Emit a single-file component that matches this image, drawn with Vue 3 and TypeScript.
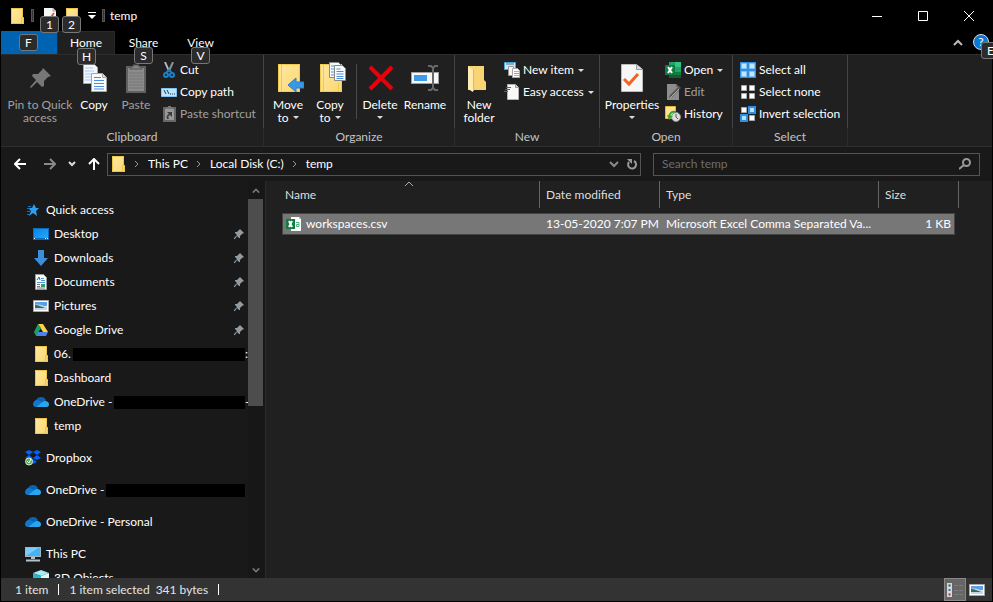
<script setup lang="ts">
interface Tab { label: string; tip: string; active?: boolean }
interface SmallCommand { label: string; icon: string; disabled?: boolean; caret?: boolean }
interface LargeCommand { lines: string[]; icon: string; width: string; disabled?: boolean; caret?: boolean; divider?: boolean }
interface Group { name: string; size: string; large: LargeCommand[]; small: SmallCommand[] }
interface TreeNode { label: string; icon: string; level: number; pinned?: boolean; redacted?: boolean; tail?: string; spaced?: boolean }

const tabs: Tab[] = [
  { label: 'Home', tip: 'H', active: true },
  { label: 'Share', tip: 'S' },
  { label: 'View', tip: 'V' },
]

const groups: Group[] = [
  {
    name: 'Clipboard',
    size: 'clipboard',
    large: [
      { lines: ['Pin to Quick', 'access'], icon: 'pin-large', width: 'wide', disabled: true },
      { lines: ['Copy'], icon: 'copy', width: 'normal' },
      { lines: ['Paste'], icon: 'paste', width: 'normal', disabled: true },
    ],
    small: [
      { label: 'Cut', icon: 'cut' },
      { label: 'Copy path', icon: 'copy-path' },
      { label: 'Paste shortcut', icon: 'paste-shortcut', disabled: true },
    ],
  },
  {
    name: 'Organize',
    size: 'organize',
    large: [
      { lines: ['Move', 'to'], icon: 'move-to', width: 'normal', caret: true },
      { lines: ['Copy', 'to'], icon: 'copy-to', width: 'normal', caret: true },
      { lines: ['Delete', ''], icon: 'delete', width: 'normal', caret: true, divider: true },
      { lines: ['Rename'], icon: 'rename', width: 'medium' },
    ],
    small: [],
  },
  {
    name: 'New',
    size: 'new',
    large: [{ lines: ['New', 'folder'], icon: 'new-folder', width: 'normal' }],
    small: [
      { label: 'New item', icon: 'new-item', caret: true },
      { label: 'Easy access', icon: 'easy-access', caret: true },
    ],
  },
  {
    name: 'Open',
    size: 'open',
    large: [{ lines: ['Properties', ''], icon: 'properties', width: 'broad', caret: true }],
    small: [
      { label: 'Open', icon: 'excel', caret: true },
      { label: 'Edit', icon: 'edit', disabled: true },
      { label: 'History', icon: 'history' },
    ],
  },
  {
    name: 'Select',
    size: 'select',
    large: [],
    small: [
      { label: 'Select all', icon: 'select-all' },
      { label: 'Select none', icon: 'select-none' },
      { label: 'Invert selection', icon: 'invert' },
    ],
  },
]

const crumbs: string[] = ['This PC', 'Local Disk (C:)', 'temp']

const tree: TreeNode[] = [
  { label: 'Quick access', icon: 'star', level: 0 },
  { label: 'Desktop', icon: 'desktop', level: 1, pinned: true },
  { label: 'Downloads', icon: 'downloads', level: 1, pinned: true },
  { label: 'Documents', icon: 'documents', level: 1, pinned: true },
  { label: 'Pictures', icon: 'pictures', level: 1, pinned: true },
  { label: 'Google Drive', icon: 'gdrive', level: 1, pinned: true },
  { label: '06.', icon: 'folder', level: 1, redacted: true, tail: ':' },
  { label: 'Dashboard', icon: 'folder', level: 1 },
  { label: 'OneDrive -', icon: 'onedrive', level: 1, redacted: true, tail: '-' },
  { label: 'temp', icon: 'folder', level: 1 },
  { label: 'Dropbox', icon: 'dropbox', level: 0, spaced: true },
  { label: 'OneDrive -', icon: 'onedrive', level: 0, redacted: true, spaced: true },
  { label: 'OneDrive - Personal', icon: 'onedrive', level: 0, spaced: true },
  { label: 'This PC', icon: 'pc', level: 0, spaced: true },
  { label: '3D Objects', icon: 'objects', level: 1 },
]
</script>

<template>
  <svg class="sprite" aria-hidden="true">
    <defs>
      <linearGradient id="gold" x1="0" y1="0" x2="1" y2="1">
        <stop offset="0" stop-color="#ffe9a2" /><stop offset="1" stop-color="#fbd86f" />
      </linearGradient>
      <linearGradient id="sky" x1="0" y1="0" x2="1" y2="1">
        <stop offset="0" stop-color="#0a84e4" /><stop offset="1" stop-color="#22aaff" />
      </linearGradient>
    </defs>
    <symbol id="i-folder" viewBox="0 0 16 16">
      <path d="M2 0h12v9l1 1v6H2z" fill="url(#gold)" />
      <path d="M2.500 .5h11v9M2.500 .5v15h12v-6h-2v6" fill="none" stroke="#efc345" />
    </symbol>
    <symbol id="i-doc-check" viewBox="0 0 16 16">
      <path d="M2 0h9l3 3v13H2z" fill="#f6f6f6" /><path d="M11 0v3h3" fill="none" stroke="#999" />
      <path d="M4 9l3 3 5-7" fill="none" stroke="#e5602c" stroke-width="2" />
    </symbol>
    <symbol id="i-pin-large" viewBox="0 0 32 32">
      <path d="M19 6l8 8-3 1-4 4v5l-2 1-5-5-6 6-1-1 6-7-4-4 1-2h5l4-4z" fill="#777" />
    </symbol>
    <symbol id="i-copy" viewBox="0 0 32 32">
      <path d="M5.500 2.500h11l3 3v16h-14z" fill="#f4f8fc" stroke="#a6a6a6" />
      <path d="M7 6h8M7 9h9M7 12h9M7 15h9M7 18h9" stroke="#a4c8f5" />
      <path d="M13.500 11.500h11l4 4v14h-15z" fill="#f8fafc" stroke="#a6a6a6" />
      <path d="M16 15.500h7M16 18.500h10M16 21.500h10M16 24.500h10M16 27h10" stroke="#4a90e2" />
      <path d="M24.500 11.500v4h4" fill="#ddd" stroke="#a6a6a6" />
    </symbol>
    <symbol id="i-paste" viewBox="0 0 32 32">
      <path d="M7 5h18v25H7z" fill="#8b8b8b" stroke="#606060" stroke-width="2" />
      <path d="M10 7V5h3V3h6v2h3v2z" fill="#858585" stroke="#555" />
      <path d="M9 11h14M9 14h14M9 17h14M9 20h14M9 23h14M9 26h14" stroke="#777" />
    </symbol>
    <symbol id="i-cut" viewBox="0 0 16 16">
      <path d="M4 0l4 9M12 0L8 9" stroke="#8c9499" stroke-width="2" fill="none" />
      <path d="M4 0l4 9" stroke="#c5cbd0" />
      <ellipse cx="5" cy="13" rx="2" ry="2" fill="none" stroke="#1682ca" stroke-width="2" />
      <ellipse cx="11" cy="13" rx="2" ry="2" fill="none" stroke="#1682ca" stroke-width="2" />
      <path d="M5 11l3-3 3 3" stroke="#1682ca" stroke-width="2" fill="none" />
    </symbol>
    <symbol id="i-copy-path" viewBox="0 0 16 16">
      <path d="M.5 4.500h15v8H.5z" fill="#bfe3fb" stroke="#84c3ee" />
      <path d="M3 6l2 4M6 6l2 4M9 10h1M11 10h1M13 10h1" stroke="#16415f" fill="none" />
    </symbol>
    <symbol id="i-paste-shortcut" viewBox="0 0 16 16">
      <path d="M3 2h11v13H3z" fill="#999" stroke="#666" stroke-width="2" />
      <path d="M5 3V1h2V0h3v1h2v2z" fill="#777" />
      <path d="M6 13c-1-3 0-4 2-5L6 6h5v5L9 9c-2 1-2 2-1 4z" fill="#3c3c3c" />
    </symbol>
    <symbol id="i-move-to" viewBox="0 0 32 32">
      <path d="M6 2h22v28H6z" fill="url(#gold)" /><path d="M6.500 2.500h21v27h-21zM9.500 3v26" fill="none" stroke="#f3c84b" />
      <path d="M16 23l8-7v4h8v6h-8v4z" fill="#3a98e8" stroke="#2f7fc8" />
    </symbol>
    <symbol id="i-copy-to" viewBox="0 0 32 32">
      <path d="M6 2h22v28H6z" fill="url(#gold)" /><path d="M6.500 2.500h21v27h-21zM9.500 3v26M24.500 29v-8" fill="none" stroke="#f3c84b" />
      <path d="M15.500 .5h9l3 3v12h-12z" fill="#f4f8fc" stroke="#8a8a8a" />
      <path d="M17 4h3M17 7h3M17 10h3M17 13h3" stroke="#4a90e2" />
      <path d="M20.500 3.500h8l3 3v12h-11z" fill="#f8fafc" stroke="#8a8a8a" />
      <path d="M22.500 7h4M22.500 9.500h7M22.500 12h7M22.500 14.500h7M22.500 16.500h7" stroke="#4a90e2" />
    </symbol>
    <symbol id="i-delete" viewBox="0 0 32 32">
      <path d="M6 5l22 22M28 5L6 27" stroke="#e8000d" stroke-width="4" />
    </symbol>
    <symbol id="i-rename" viewBox="0 0 32 32">
      <path d="M2 10h28v12H2z" fill="#a0a0a0" /><path d="M3 11h26v10H3z" fill="#f7f7f7" />
      <path d="M5 13h13v6H5z" fill="#3d9bea" />
      <path d="M19 4h3l2 2v20l-2 2h-3M29 4h-3l-2 2v20l2 2h3" fill="none" stroke="#696969" stroke-width="2" />
    </symbol>
    <symbol id="i-new-folder" viewBox="0 0 32 32">
      <path d="M5 4h16v14l2 2v8H5z" fill="#f9d472" /><path d="M5 4l5 4v22l-5-3z" fill="#ffecb0" />
      <path d="M10.500 8v21" stroke="#e6b84d" />
    </symbol>
    <symbol id="i-new-item" viewBox="0 0 16 16">
      <path d="M.5 .5h11v7H.5z" fill="#cfe8f6" stroke="#4ba3d4" /><path d="M2 2h8" stroke="#39718f" />
      <path d="M4.500 4.500h5v9h-5z" fill="#f6f6f6" stroke="#999" />
      <path d="M8.500 6.500h5l2 2v7h-7z" fill="#fff" stroke="#aaa" />
      <path d="M10 9.500h5M10 13.500h5" stroke="#f09a90" /><path d="M10 11.500h5" stroke="#70a3e0" />
    </symbol>
    <symbol id="i-easy-access" viewBox="0 0 16 16">
      <path d="M3.500 .5h8l3 3v12h-11z" fill="#f8f8f8" stroke="#b2b2b2" /><path d="M11.500 .5v3h3" fill="#ddd" stroke="#999" />
      <path d="M2 3.500h5M1 5.500h5M0 7.500h4" stroke="#2b6fa8" />
    </symbol>
    <symbol id="i-properties" viewBox="0 0 32 32">
      <path d="M5.500 2.500h15l6 5v22h-21z" fill="#f7f7f7" stroke="#bcbcbc" /><path d="M20.500 2.500v5h6" fill="#ddd" stroke="#999" />
      <path d="M8 17l5 5 9-10" fill="none" stroke="#f26322" stroke-width="3" />
    </symbol>
    <symbol id="i-excel" viewBox="0 0 16 16">
      <path d="M4 0h12v16H4z" fill="#21a366" /><path d="M10 0h6v5h-6z" fill="#33c481" /><path d="M4 5h6v5H4z" fill="#107c41" /><path d="M4 10h12v6H4z" fill="#185c37" /><path d="M10 10h6v3h-6z" fill="#107c41" />
      <path d="M0 3h10v10H0z" fill="#107c41" /><path d="M3 5l4 6M7 5l-4 6" stroke="#fff" stroke-width="2" />
    </symbol>
    <symbol id="i-edit" viewBox="0 0 16 16">
      <path d="M2 0h9l3 3v13H2z" fill="#8d8d8d" /><path d="M11 0v3h3" fill="#666" /><path d="M4 14l1-3 9-9 2 2-9 9z" fill="#555" /><path d="M5 14l9-9" stroke="#aaa" />
    </symbol>
    <symbol id="i-history" viewBox="0 0 16 16">
      <path d="M.5 .5h10v12H.5z" fill="#ffe28a" stroke="#e3b63c" />
      <circle cx="11" cy="11" r="4.500" fill="#ddd" stroke="#8c8c8c" /><path d="M11 8v3l2 2" fill="none" stroke="#555" />
      <path d="M4 12C4 7 7 5 11 6" fill="none" stroke="#34a53d" stroke-width="2" /><path d="M2 9l2 5 4-4z" fill="#34a53d" />
    </symbol>
    <symbol id="i-select-all" viewBox="0 0 16 16">
      <path d="M0 0h16v16H0z" fill="#2f8fe3" />
      <path d="M1.500 1.500h5v5h-5zM9.500 1.500h5v5h-5zM1.500 9.500h5v5h-5zM9.500 9.500h5v5h-5z" fill="#c4e5fc" stroke="#7fc0f5" />
    </symbol>
    <symbol id="i-select-none" viewBox="0 0 16 16">
      <path d="M1.500 1.500h5v5h-5zM9.500 1.500h5v5h-5zM1.500 9.500h5v5h-5zM9.500 9.500h5v5h-5z" fill="#fff" stroke="#aaa" />
    </symbol>
    <symbol id="i-invert" viewBox="0 0 16 16">
      <path d="M1.500 1.500h5v5h-5zM9.500 9.500h5v5h-5z" fill="#fff" stroke="#aaa" />
      <path d="M9 1h6v6H9zM1 9h6v6H1z" fill="#b9dffb" stroke="#2f8fe3" stroke-width="2" />
    </symbol>
    <symbol id="i-star" viewBox="0 0 16 16">
      <path d="M9 2l2 4h3l-3 3 1 5-4-3-4 3 2-5-3-3h4z" fill="#2d9ff0" />
      <path d="M3 4.500h3M2 6.500h3M2 9.500h3M2 12.500h3" stroke="#1c6fb0" />
    </symbol>
    <symbol id="i-desktop" viewBox="0 0 16 16">
      <path d="M0 2h16v12H0z" fill="#0a6cc0" /><path d="M1 3h14v9H1z" fill="url(#sky)" /><path d="M1 12.500h1M12 12.500h1M14 12.500h1" stroke="#fff" />
    </symbol>
    <symbol id="i-downloads" viewBox="0 0 16 16">
      <path d="M5 0h6v8h4l-7 8-7-8h4z" fill="#3a90dc" />
    </symbol>
    <symbol id="i-documents" viewBox="0 0 16 16">
      <path d="M2.500 .5h8l3 3v12h-11z" fill="#fafafa" stroke="#999" />
      <path d="M8 4.500h3M8 6.500h4M4 8.500h8" stroke="#4398d8" /><path d="M4 6l2-3 1 3" fill="none" stroke="#1c74b8" />
      <path d="M4 10.500h3M4 12.500h3M4 14h8" stroke="#777" /><path d="M8 10h4v3H8z" fill="#397" />
    </symbol>
    <symbol id="i-pictures" viewBox="0 0 16 16">
      <path d="M.5 2.500h15v11H.5z" fill="#fff" stroke="#a7a7a7" /><path d="M2 4h12v4H2z" fill="#5a9fe8" /><path d="M2 7c4-1 7 0 12 2v3H2z" fill="#c3d8e6" /><path d="M2 7c4 0 7 2 10 3H2z" fill="#386c58" />
    </symbol>
    <symbol id="i-gdrive" viewBox="0 0 16 16">
      <path d="M5 2h5l5 8h-5z" fill="#ffcf48" /><path d="M5 2l3 4-5 8-2-4z" fill="#1aa15f" /><path d="M5 10h10l-2 4H3z" fill="#4c82ee" />
    </symbol>
    <symbol id="i-onedrive" viewBox="0 0 16 16">
      <path d="M2 9C2 6 5 3 8 3c3 0 5 2 5 4z" fill="#0863b5" /><path d="M0 10c0-2 2-4 4-4 2 0 3 1 5 2l-6 5c-2 0-3-1-3-3z" fill="#1277cf" />
      <path d="M9 8c2-2 7-1 7 2s-2 3-3 3H3z" fill="#29a5ee" />
    </symbol>
    <symbol id="i-dropbox" viewBox="0 0 16 16">
      <path d="M4 0l4 2-4 3-4-3zM12 0l4 2-4 3-4-3zM4 5l4 3-4 2-4-2zM12 5l4 3-4 2-4-2zM8 9l4 3-4 2-4-2z" fill="#0061fe" />
      <circle cx="4" cy="11.500" r="3.500" fill="#4cae45" stroke="#d6edcf" /><path d="M2 11l2 2 2-4" fill="none" stroke="#fff" />
    </symbol>
    <symbol id="i-pc" viewBox="0 0 16 16">
      <path d="M0 1h16v10H0z" fill="#9fb6c6" /><path d="M1 2h14v8H1z" fill="#45b2f3" /><path d="M1 10V2h12z" fill="#7ecbf8" /><path d="M6 12h4M1 14.500h14" stroke="#b3c1cc" stroke-width="2" />
    </symbol>
    <symbol id="i-objects" viewBox="0 0 16 16">
      <path d="M0 3l8-3 8 3-8 3z" fill="#a5edf3" /><path d="M0 3l8 3v10l-8-3z" fill="#25b7cc" /><path d="M16 3L8 6v10l8-3z" fill="#e2f8fa" />
    </symbol>
    <symbol id="i-pin" viewBox="0 0 10 10">
      <path d="M6 0l4 4-2 1-2 2v2H5L3 7 1 10H0V9l3-3-2-2 0-1h2l2-2z" fill="#919ba1" />
    </symbol>
    <symbol id="i-csv" viewBox="0 0 16 16">
      <path d="M5 1h8l2 2v12H5z" fill="#fff" /><path d="M13 1v2h2" fill="#bbb" /><path d="M0 3h9v10H0z" fill="#107c41" /><path d="M3 5l3 6M6 5l-3 6" stroke="#fff" stroke-width="2" />
      <path d="M10 6.500h3v4h-2.500V8.500H13" fill="none" stroke="#42ba7b" />
    </symbol>
  </svg>

  <div class="window">
    <header class="titlebar">
      <svg class="i16"><use href="#i-folder" /></svg>
      <span class="grip"></span>
      <button class="quick" aria-label="Properties"><svg class="i16"><use href="#i-doc-check" /></svg><kbd class="tip">1</kbd></button>
      <button class="quick" aria-label="New folder"><svg class="i16"><use href="#i-folder" /></svg><kbd class="tip">2</kbd></button>
      <button class="customize" aria-label="Customize Quick Access Toolbar">
        <svg viewBox="0 0 8 8" width="8" height="8"><path d="M0 .5h8" stroke="#fff" /><path d="M0 3h8L4 7z" fill="#fff" /></svg>
      </button>
      <span class="grip"></span>
      <h1 class="title">temp</h1>
      <div class="controls">
        <button aria-label="Minimize"><svg viewBox="0 0 10 10"><path d="M0 5.500h10" /></svg></button>
        <button aria-label="Maximize"><svg viewBox="0 0 10 10"><path d="M.5 .5h9v9h-9z" /></svg></button>
        <button aria-label="Close"><svg viewBox="0 0 10 10"><path d="M0 0l10 10M10 0L0 10" /></svg></button>
      </div>
    </header>

    <nav class="tabs" aria-label="Ribbon tabs">
      <button class="file" aria-label="File"><kbd class="tip">F</kbd></button>
      <button v-for="tab in tabs" :key="tab.label" class="tab" :class="{ active: tab.active }">
        {{ tab.label }}<kbd class="tip">{{ tab.tip }}</kbd>
      </button>
      <button class="collapse" aria-label="Collapse ribbon"><svg viewBox="0 0 10 7" width="10" height="7"><path d="M1 6l4-4 4 4" fill="none" stroke="#bbb" stroke-width="2" /></svg></button>
      <button class="help" aria-label="Help">?<kbd class="tip">E</kbd></button>
    </nav>

    <section class="ribbon">
      <div v-for="group in groups" :key="group.name" class="group" :class="group.size">
        <div class="commands">
          <template v-for="cmd in group.large" :key="cmd.icon">
            <span v-if="cmd.divider" class="divider"></span>
            <button class="large" :class="cmd.width" :disabled="cmd.disabled">
              <svg class="i32"><use :href="'#i-' + cmd.icon" /></svg>
              <span v-for="(line, n) in cmd.lines" :key="n" class="line">
                <span v-if="line">{{ line }}</span><i v-if="cmd.caret && n === 1" class="caret"></i>
              </span>
            </button>
          </template>
          <div v-if="group.small.length" class="stack">
            <button v-for="cmd in group.small" :key="cmd.label" class="small" :disabled="cmd.disabled">
              <svg class="i16"><use :href="'#i-' + cmd.icon" /></svg>{{ cmd.label }}<i v-if="cmd.caret" class="caret"></i>
            </button>
          </div>
        </div>
        <div class="group-name">{{ group.name }}</div>
      </div>
    </section>

    <div class="location">
      <div class="history">
        <button aria-label="Back"><svg viewBox="0 0 12 12" width="12" height="12"><path d="M12 6H1M6 1L1 6l5 5" fill="none" stroke="#fff" stroke-width="2" /></svg></button>
        <button aria-label="Forward"><svg viewBox="0 0 12 12" width="12" height="12"><path d="M0 6h11M6 1l5 5-5 5" fill="none" stroke="#8a8a8a" stroke-width="2" /></svg></button>
        <button class="recent" aria-label="Recent locations"><svg viewBox="0 0 8 6" width="8" height="6"><path d="M1 1l3 3 3-3" fill="none" stroke="#ddd" stroke-width="2" /></svg></button>
        <button aria-label="Up"><svg viewBox="0 0 12 12" width="12" height="12"><path d="M6 12V1M1 6l5-5 5 5" fill="none" stroke="#fff" stroke-width="2" /></svg></button>
      </div>
      <div class="address">
        <svg class="i16"><use href="#i-folder" /></svg>
        <template v-for="crumb in crumbs" :key="crumb">
          <svg class="sep" viewBox="0 0 5 8" width="5" height="8"><path d="M1 1l3 3-3 3" fill="none" stroke="#999" stroke-width="1" /></svg>
          <a href="#">{{ crumb }}</a>
        </template>
        <button class="previous" aria-label="Previous locations"><svg viewBox="0 0 10 7" width="10" height="7"><path d="M1 1l4 4 4-4" fill="none" stroke="#8b8b8b" stroke-width="2" /></svg></button>
        <button class="refresh" aria-label="Refresh"><svg viewBox="0 0 12 12" width="12" height="12"><path d="M8 3a4 4 0 1 1-5 1" fill="none" stroke="#999" stroke-width="2" /><path d="M1 1h5v5z" fill="#999" /></svg></button>
      </div>
      <label class="search">
        <input type="search" placeholder="Search temp" aria-label="Search temp" />
        <svg viewBox="0 0 12 12" width="12" height="12"><circle cx="7.500" cy="4.500" r="3.500" fill="none" stroke="#999" stroke-width="2" /><path d="M5 7l-5 4" stroke="#999" stroke-width="2" /></svg>
      </label>
    </div>

    <main class="body">
      <nav class="tree" aria-label="Folders">
        <a v-for="(node, n) in tree" :key="n" href="#" class="node" :class="['level-' + node.level, { spaced: node.spaced }]">
          <svg class="i16"><use :href="'#i-' + node.icon" /></svg>
          <span>{{ node.label }}</span>
          <span v-if="node.redacted" class="redacted"></span>
          <span v-if="node.redacted" class="tail">{{ node.tail }}</span>
          <svg v-if="node.pinned" class="pin"><use href="#i-pin" /></svg>
        </a>
      </nav>
      <div class="scrollbar">
        <svg viewBox="0 0 10 6" width="8" height="6"><path d="M1 5l4-4 4 4" fill="none" stroke="#777" stroke-width="2" /></svg>
        <div class="track"><div class="thumb"></div></div>
        <svg viewBox="0 0 10 6" width="8" height="6"><path d="M1 1l4 4 4-4" fill="none" stroke="#777" stroke-width="2" /></svg>
      </div>
      <section class="files">
        <table>
          <colgroup><col class="c-name" /><col class="c-date" /><col class="c-type" /><col class="c-size" /><col class="c-end" /></colgroup>
          <thead>
            <tr>
              <th>Name<svg class="sort" viewBox="0 0 8 5" width="8" height="5"><path d="M0 4l4-4 4 4" fill="none" stroke="#aaa" /></svg></th>
              <th>Date modified</th><th>Type</th><th colspan="2">Size</th>
            </tr>
          </thead>
          <tbody>
            <tr>
              <td><div class="file-name"><svg class="i16"><use href="#i-csv" /></svg>workspaces.csv</div></td>
              <td>13-05-2020 7:07 PM</td>
              <td>Microsoft Excel Comma Separated Va...</td>
              <td class="size">1 KB</td>
            </tr>
          </tbody>
        </table>
      </section>
    </main>

    <footer class="status">
      <span class="cell">1 item</span>
      <span class="cell">1 item selected<span class="bytes">341 bytes</span></span>
      <div class="views">
        <button class="current" aria-label="Details view">
          <svg viewBox="0 0 16 14" width="16" height="14"><path d="M0 0h5v14H0z" fill="#d8d8d8" /><path d="M1.500 2.500h2" stroke="#1c6a40" stroke-width="2" /><path d="M1.500 7h2" stroke="#3572c4" stroke-width="2" /><path d="M1.500 11.500h2" stroke="#b5322b" stroke-width="2" /><path d="M7 2.500h4M12 2.500h4M7 7.500h4M12 7.500h4M7 11.500h4M12 11.500h4" stroke="#7c7c7c" /></svg>
        </button>
        <button aria-label="Large icons view"><svg class="i16"><use href="#i-pictures" /></svg></button>
      </div>
    </footer>
  </div>
</template>

<style>
body { background: #000; overflow: hidden; }
</style>

<style scoped>
* { box-sizing: border-box; }
.sprite { position: absolute; width: 0; height: 0; }
.window { height: 100vh; display: flex; flex-direction: column; padding: 0 1px 1px; overflow: hidden; background: #000; color: #fff; font: 12px/16px Lato, "Open Sans", sans-serif; }
button { display: flex; align-items: center; justify-content: center; padding: 0; border: 0; background: none; color: inherit; font: inherit; white-space: nowrap; }
a { color: inherit; text-decoration: none; white-space: nowrap; }
svg { display: block; flex: none; }
.i16 { width: 16px; height: 16px; }
.i32 { width: 32px; height: 32px; }
.tip { position: absolute; z-index: 2; width: 19px; height: 17px; border: 1px solid #777; border-radius: 3px; background: #2b2b2b; color: #fff; font: 12px/15px Lato, "Open Sans", sans-serif; text-align: center; }
.caret { flex: none; border: 3px solid transparent; border-top-color: #ddd; border-bottom: 0; }

.titlebar { display: flex; align-items: center; height: 31px; padding-left: 8px; flex: none; }
.grip { width: 3px; height: 13px; margin: 0 5px 0 6px; border: 1px solid #555; background: #333; }
.quick { position: relative; width: 22px; height: 31px; }
.quick .tip { top: 16px; left: 1px; }
.customize { width: 13px; height: 20px; justify-content: flex-end; }
.title { margin: 0; font-size: 12px; line-height: 16px; font-weight: 400; }
.controls { display: flex; margin-left: auto; }
.controls button { width: 46px; height: 31px; }
.controls svg { width: 10px; height: 10px; overflow: visible; fill: none; stroke: #fff; }

.tabs { display: flex; flex: none; height: 23px; }
.tabs button { position: relative; }
.file { width: 56px; background: #0063b1; }
.file .tip { top: 3px; left: 18px; }
.tab { width: 57px; }
.tab .tip { top: 16px; left: 19px; }
.tab.active { border: 1px solid #2b2b2b; border-bottom: 0; background: #202020; width: 58px; }
.collapse { width: 24px; margin-left: auto; }
.help { width: 16px; height: 16px; margin: 3px 3px 0 3px; border: 1px solid #ddd; border-radius: 50%; background: #0a78d4; }
.help .tip { top: 7px; left: 7px; }

.ribbon { display: flex; flex: none; background: #202020; border: solid #2d2d2d; border-width: 1px 0; }
.group { display: flex; flex-direction: column; flex: none; border-right: 1px solid #2b2b2b; }
.clipboard { width: 263px; }
.organize { width: 191px; }
.new { width: 145px; }
.open { width: 133px; }
.select { width: 115px; }
.commands { display: flex; height: 73px; padding-left: 3px; margin-right: -1px; border-right: 1px solid #444; }
.clipboard .commands { padding-left: 6px; }
.group-name { height: 18px; line-height: 18px; text-align: center; color: #c4c4c4; }
.large { flex-direction: column; justify-content: flex-start; padding-top: 7px; }
.large .line { display: flex; align-items: center; gap: 4px; height: 13px; line-height: 13px; }
.large .i32 { margin-bottom: 4px; }
.normal { width: 42px; }
.medium { width: 48px; }
.broad { width: 58px; }
.wide { width: 66px; }
.large:disabled, .small:disabled { color: #a0a0a0; }
.divider { width: 1px; height: 55px; margin: 9px 2px 0 5px; background: #4a4a4a; }
.stack { padding: 4px 0 0 4px; }
.small { height: 22px; gap: 3px; }
.small .caret { margin-left: 1px; }

.location { display: flex; flex: none; align-items: center; height: 34px; padding-right: 12px; background: #191919; }
.history { display: flex; align-items: center; flex: none; width: 106px; padding-left: 13px; gap: 18px; }
.history .recent { margin: 0 -6px; }
.address { display: flex; align-items: center; flex: 534 1 534px; height: 23px; border: 1px solid #535353; padding-left: 2px; }
.address .sep { margin: 0 9px 0 8px; }
.address a { line-height: 16px; }
.previous { margin-left: auto; width: 20px; }
.refresh { width: 16px; }
.search { display: flex; align-items: center; flex: 327 1 327px; height: 23px; margin-left: 12px; padding: 0 8px; border: 1px solid #535353; }
.search input { flex: 1; min-width: 0; padding: 0; border: 0; outline: 0; background: none; color: #fff; font: inherit; }
.search input::placeholder { color: #6d6d6d; opacity: 1; }

.body { display: flex; flex: 1; min-height: 0; background: #202020; }
.tree { width: 247px; flex: none; overflow: hidden; padding-top: 17px; background: #191919; }
.node { display: flex; align-items: center; height: 24px; gap: 5px; padding-left: 24px; }
.level-1 { padding-left: 32px; }
.spaced { margin-top: 8px; }
.pin { width: 10px; height: 10px; margin: 0 4px 0 auto; }
.redacted { flex: 1; height: 13px; margin-left: -3px; background: #000; }
.tail { width: 3px; margin-left: -5px; overflow: hidden; }
.scrollbar { display: flex; flex-direction: column; align-items: center; flex: none; width: 18px; padding: 7px 2px 5px 0; gap: 5px; background: #171717; border-right: 1px solid #2b2b2b; }
.track { flex: 1; align-self: stretch; }
.thumb { height: 57%; background: #4d4d4d; }
.files { flex: 1; min-width: 0; padding-left: 16px; }
table { width: 677px; table-layout: fixed; border-spacing: 0; }
.c-name { width: 258px; }
.c-date { width: 120px; }
.c-type { width: 219px; }
.c-size { width: 76px; }
.c-end { width: 4px; }
th { position: relative; height: 27px; padding: 0 0 0 6px; border-right: 1px solid #636363; color: #dedede; font-weight: 400; text-align: left; }
th:first-child { padding-left: 3px; }
.sort { position: absolute; top: 1px; left: 123px; }
tbody::before { content: ""; display: block; height: 5px; }
td { height: 22px; padding: 0 0 0 6px; border: solid #444; border-width: 1px 0; background: #777; white-space: nowrap; }
td:first-child { padding-left: 3px; border-left-width: 1px; }
td.size { padding: 0 3px 0 0; border-right-width: 1px; text-align: right; }
.file-name { display: flex; align-items: center; gap: 4px; }

.status { display: flex; align-items: center; flex: none; height: 23px; padding-left: 14px; background: #333; color: #e4e4e4; }
.cell { display: flex; align-items: center; margin-right: 10px; }
.cell::after { content: ""; width: 1px; height: 11px; margin-left: 10px; background: #fff; }
.bytes { margin-left: 6px; }
.views { display: flex; align-self: stretch; margin-left: auto; padding-right: 4px; }
.views button { width: 22px; }
.views .current { border: 1px solid #888; background: #666; }
</style>
